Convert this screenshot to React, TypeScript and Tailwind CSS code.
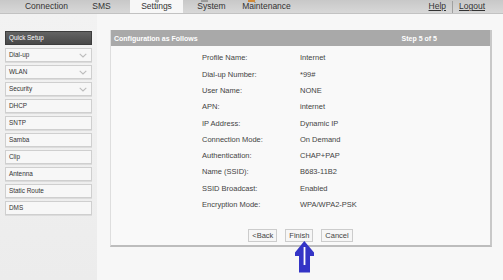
import React from "react";

const rows: [string, string][] = [
  ["Profile Name:", "Internet"],
  ["Dial-up Number:", "*99#"],
  ["User Name:", "NONE"],
  ["APN:", "internet"],
  ["IP Address:", "Dynamic IP"],
  ["Connection Mode:", "On Demand"],
  ["Authentication:", "CHAP+PAP"],
  ["Name (SSID):", "B683-11B2"],
  ["SSID Broadcast:", "Enabled"],
  ["Encryption Mode:", "WPA/WPA2-PSK"],
];

const side: { name: string; chev?: boolean; active?: boolean }[] = [
  { name: "Quick Setup", active: true },
  { name: "Dial-up", chev: true },
  { name: "WLAN", chev: true },
  { name: "Security", chev: true },
  { name: "DHCP" },
  { name: "SNTP" },
  { name: "Samba" },
  { name: "Clip" },
  { name: "Antenna" },
  { name: "Static Route" },
  { name: "DMS" },
];

const tabs = ["Connection", "SMS", "Settings", "System", "Maintenance"];

function Chevron() {
  return (
    <svg width="8" height="5" viewBox="0 0 8 5" className="shrink-0">
      <path d="M0.7 0.8 L4 4 L7.3 0.8" fill="none" stroke="#bcbcbc" strokeWidth="1.1" />
    </svg>
  );
}

export default function App() {
  return (
    <div
      className="relative w-[503px] h-[280px] overflow-hidden bg-[#f6f6f6] text-[#333]"
      style={{ fontFamily: '"Liberation Sans", Arial, sans-serif' }}
    >
      {/* top nav */}
      <div className="relative h-[14px] flex items-stretch bg-gradient-to-b from-[#c8c8c8] to-[#d8d8d8] border-b border-[#c2c2c2]">
        <div className="flex pl-[19px]">
          {tabs.map((t) => (
            <div
              key={t}
              className={
                "relative flex items-center justify-center text-[8.5px] leading-none " +
                (t === "Settings" ? "bg-[#f7f7f7] mx-[1px] w-[53px]" : "w-[55px]")
              }
            >
              {t}
            </div>
          ))}
        </div>
        <div className="ml-auto flex items-center pr-[18px] text-[8.5px] leading-none">
          <span className="underline">Help</span>
          <span className="mx-[6px] w-px h-[12px] bg-[#a0a0a0]" />
          <span className="underline">Logout</span>
        </div>
        {/* cut-off icons */}
        <div className="absolute left-[155px] top-0 w-[4px] h-[2px] bg-[#a8a8a8]" />
        <div className="absolute left-[201px] top-0 w-[7px] h-[2px] bg-[#9a9a9a]" />
        <div className="absolute left-[248px] top-0 w-[7px] h-[2px] bg-[#d08a3a]" />
      </div>

      <div className="flex h-[266px]">
        {/* sidebar */}
        <div className="w-[97px] shrink-0 bg-gradient-to-b from-[#f2f2f2] to-[#ececec] pt-[17px] px-[5px] flex flex-col gap-[3px]">
          {side.map((s) => (
            <div
              key={s.name}
              className={
                "h-[14px] flex items-center pl-[3px] pr-[4px] text-[6.4px] leading-none " +
                (s.active
                  ? "bg-gradient-to-b from-[#636363] to-[#484848] text-white border border-[#3c3c3c]"
                  : "bg-[#f7f7f7] border border-[#cfcfcf] shadow-[0_1px_0_#dcdcdc] text-[#333]")
              }
            >
              <span className="flex-1">{s.name}</span>
              {s.chev && <Chevron />}
            </div>
          ))}
        </div>

        {/* main */}
        <div className="flex-1 bg-[#f7f7f7] pl-[13px] pt-[16px]">
          <div className="w-[382px] h-[217px] flex flex-col bg-[#f9f9f9] border-l border-[#dedede] border-r-2 border-r-[#c8c8c8] border-b-2 border-b-[#bdbdbd]">
            <div className="h-[16px] shrink-0 bg-[#a9a9a9] flex items-center pl-[3px] pr-[53px] text-white text-[7px] font-bold leading-none">
              <span className="flex-1">Configuration as Follows</span>
              <span>Step 5 of 5</span>
            </div>
            <div className="pt-[4px] flex flex-col">
              {rows.map(([k, v]) => (
                <div key={k} className="h-[16.3px] flex items-center text-[7.5px] leading-none text-[#444]">
                  <span className="ml-[91px] w-[98px]">{k}</span>
                  <span>{v}</span>
                </div>
              ))}
            </div>
            <div className="mt-[16px] flex justify-center gap-[8px]">
              {["<Back", "Finish", "Cancel"].map((b) => (
                <div
                  key={b}
                  className="h-[13px] px-[3px] flex items-center justify-center bg-[#f6f6f6] border border-[#cccccc] text-[7.5px] leading-none text-[#444]"
                >
                  {b}
                </div>
              ))}
            </div>
          </div>
        </div>
      </div>

      {/* annotation arrow */}
      <svg className="absolute left-[293px] top-[240px]" width="22" height="34" viewBox="293 240 22 34">
        <polygon
          points="304.3,241 314,252.5 314,256 310,256 310,272.5 299,272.5 299,256 295,256 295,252.5"
          fill="#3434c6"
        />
        <line x1="304.5" y1="247" x2="304.5" y2="265" stroke="#ffffff" strokeWidth="1.8" />
      </svg>
    </div>
  );
}
